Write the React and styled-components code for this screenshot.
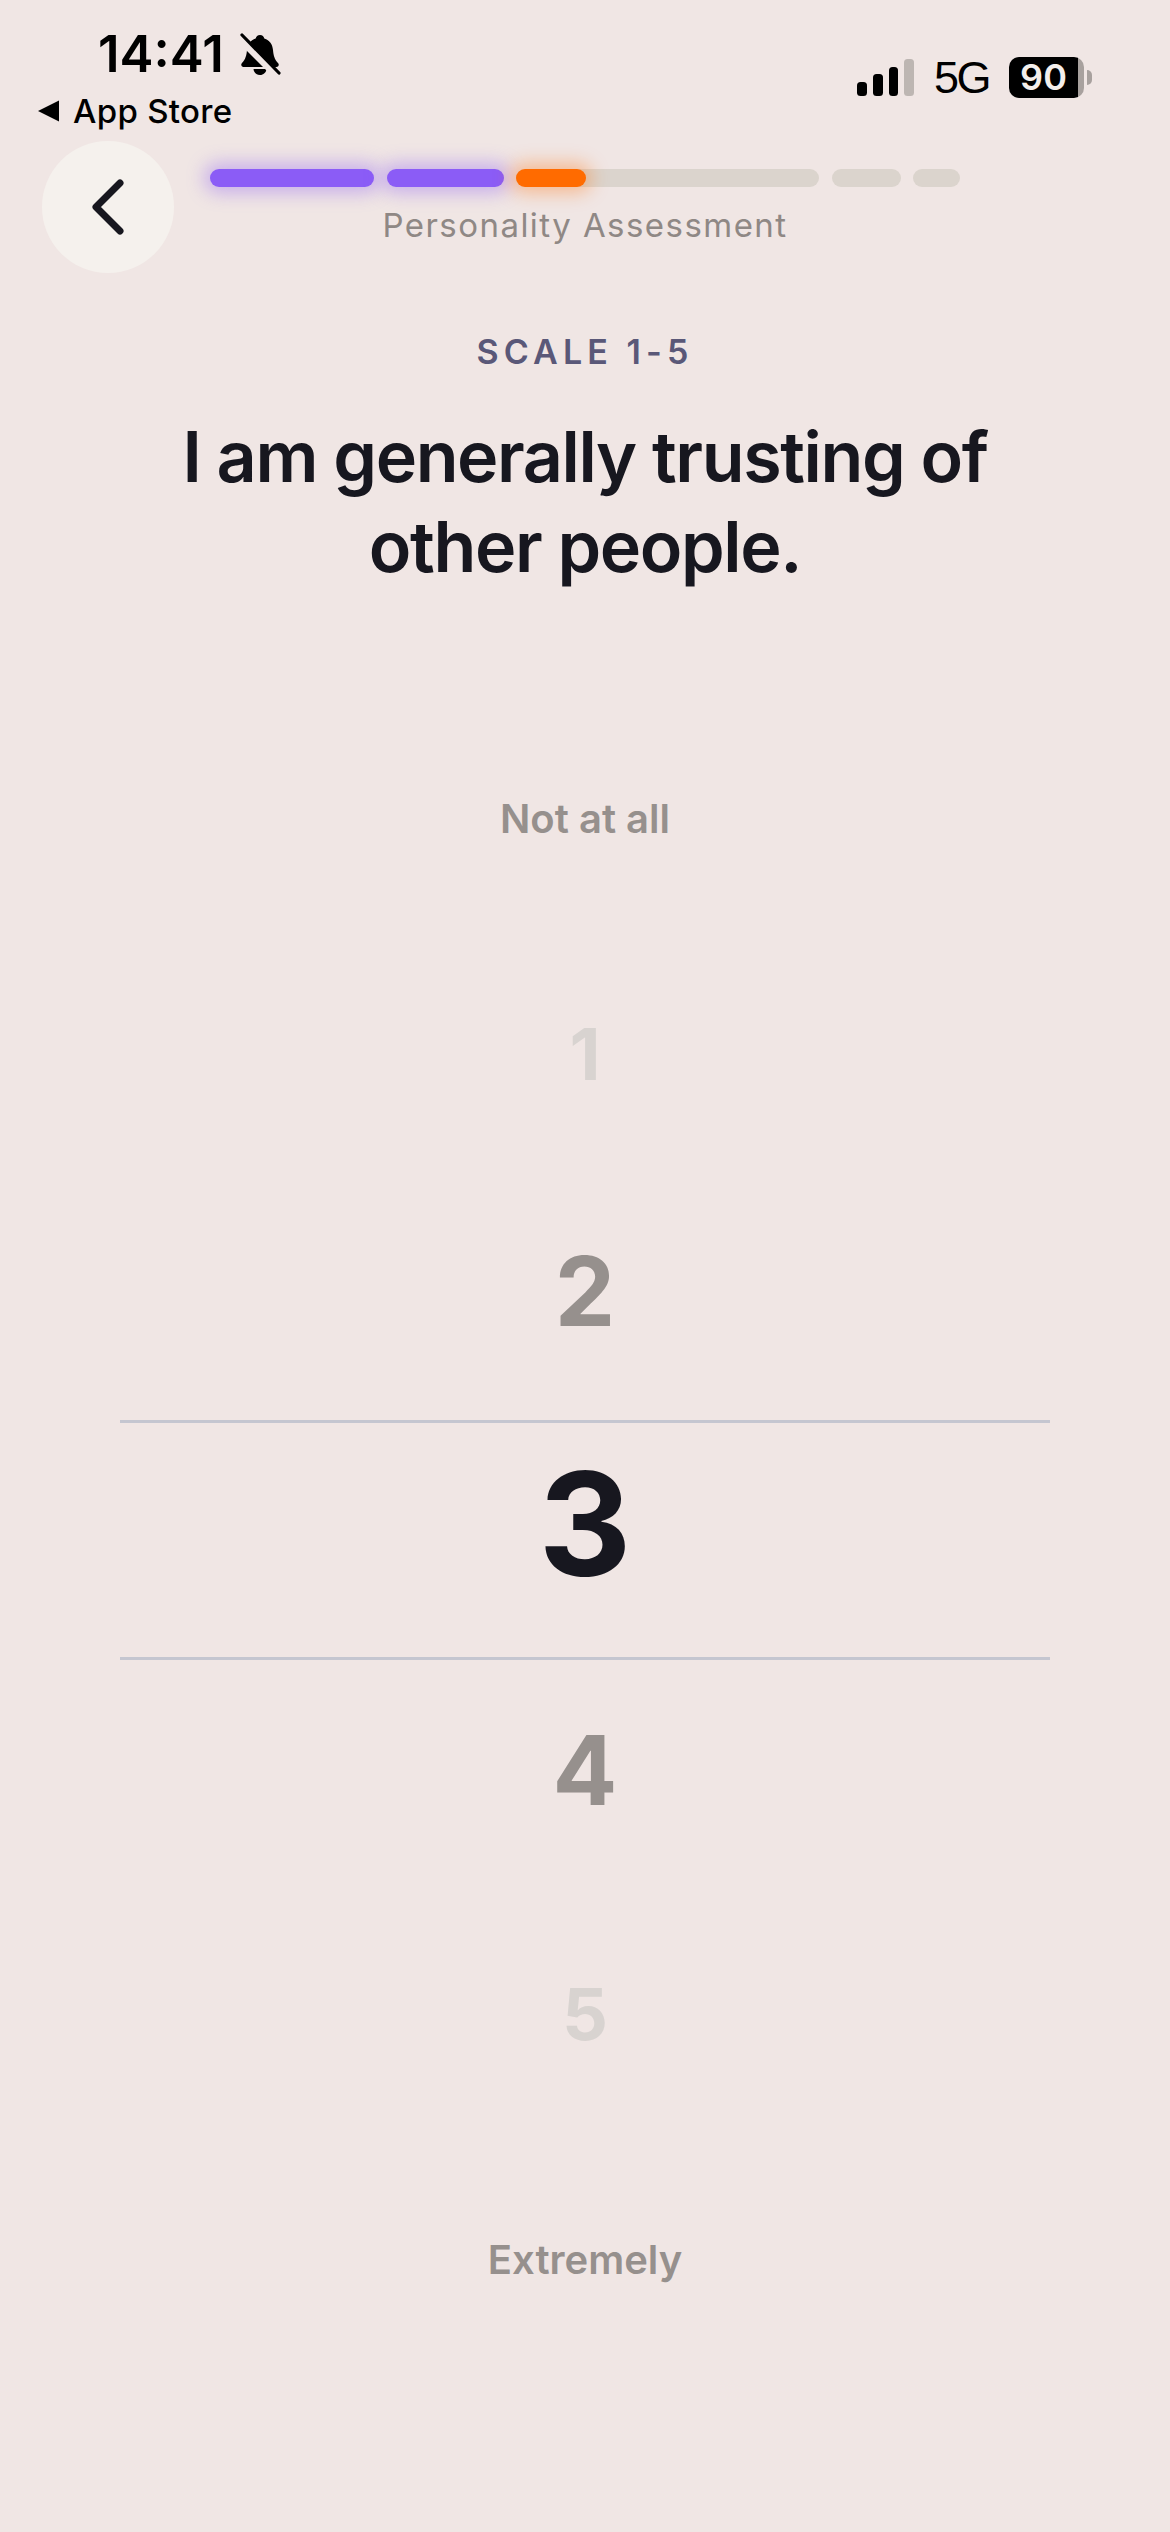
import React from 'react';
import styled, { createGlobalStyle } from 'styled-components';

const Global = createGlobalStyle`
  html, body {
    margin: 0;
    padding: 0;
    background: #f0e6e4;
  }
  * { box-sizing: border-box; }
`;

const Page = styled.div`
  width: 1170px;
  height: 2532px;
  overflow: hidden;
  background: #f0e6e4;
  font-family: Inter, "Liberation Sans", sans-serif;
  color: #17171f;
`;

const StatusBar = styled.div`
  display: flex;
  justify-content: space-between;
  height: 141px;
`;

const StatusLeft = styled.div`
  display: flex;
  flex-direction: column;
  padding: 24px 0 0 38px;
`;

const TimeRow = styled.div`
  display: flex;
  align-items: center;
  gap: 15px;
  padding-left: 60px;
  height: 60px;
`;

const Time = styled.span`
  font-size: 51px;
  font-weight: 600;
  line-height: 60px;
  color: #000;
`;

const BackToApp = styled.div`
  display: flex;
  align-items: center;
  gap: 13px;
  height: 40px;
  margin-top: 7px;
  font-size: 33px;
  font-weight: 500;
  letter-spacing: 0.3px;
  color: #000;
`;

const StatusRight = styled.div`
  display: flex;
  align-items: center;
  gap: 20px;
  height: 41px;
  margin-top: 57px;
  padding-right: 86px;
`;

const Network = styled.span`
  font-family: "Liberation Sans", Arial, sans-serif;
  font-size: 45px;
  line-height: 41px;
  letter-spacing: -2.5px;
  color: #000;
`;

const Battery = styled.div`
  position: relative;
  width: 75px;
  height: 41px;
  border-radius: 10px;
  background: linear-gradient(90deg, #000 0 69px, #a8a19e 69px);
  color: #f4efec;
  font-size: 36px;
  font-weight: 600;
  line-height: 41px;
  text-align: center;
  padding-right: 6px;

  &::after {
    content: '';
    position: absolute;
    left: 78px;
    top: 13px;
    width: 5px;
    height: 15px;
    border-radius: 0 5px 5px 0;
    background: #a8a19e;
  }
`;

const Header = styled.div`
  display: grid;
  grid-template-columns: 132px 750px;
  column-gap: 36px;
  padding-left: 42px;
  height: 132px;
`;

const BackButton = styled.button`
  display: flex;
  align-items: center;
  justify-content: center;
  width: 132px;
  height: 132px;
  padding: 0;
  border: none;
  border-radius: 50%;
  background: #f5f1ed;
`;

const ProgressBlock = styled.div`
  display: flex;
  flex-direction: column;
  align-items: center;
  padding-top: 28px;
`;

const Segments = styled.div`
  display: flex;
  gap: 12.5px;
  width: 100%;
`;

const Segment = styled.div`
  position: relative;
  width: ${(p) => p.$w}px;
  height: 18px;
  border-radius: 9px;
  background: ${(p) => (p.$done ? '#8b5cf6' : '#dbd4cd')};
  box-shadow: ${(p) => (p.$done ? '0 0 18px 6px rgba(139, 92, 246, 0.4)' : 'none')};
`;

const SegmentFill = styled.div`
  position: absolute;
  left: 0;
  top: 0;
  bottom: 0;
  width: ${(p) => p.$w}px;
  border-radius: 9px;
  background: #ff6b00;
  box-shadow: 0 0 18px 6px rgba(255, 107, 0, 0.36);
`;

const Caption = styled.div`
  margin-top: 18px;
  font-size: 33px;
  line-height: 40px;
  letter-spacing: 1.45px;
  color: #8f8885;
`;

const Question = styled.div`
  display: flex;
  flex-direction: column;
  align-items: center;
  padding-top: 57px;
`;

const Eyebrow = styled.div`
  font-size: 34px;
  font-weight: 600;
  line-height: 44px;
  letter-spacing: 5.1px;
  color: #5a5878;
`;

const Title = styled.h1`
  margin: 38px 0 0;
  font-size: 70px;
  font-weight: 600;
  line-height: 90px;
  letter-spacing: -1.4px;
  text-align: center;
  color: #17171f;
`;

const EndLabel = styled.div`
  margin-top: ${(p) => p.$top}px;
  font-size: 40px;
  font-weight: 600;
  line-height: 52px;
  text-align: center;
  color: #96908d;
`;

const Wheel = styled.div`
  display: flex;
  flex-direction: column;
  margin: 101px 120px 0;
`;

const WheelItem = styled.div`
  display: flex;
  align-items: center;
  justify-content: center;
  height: ${(p) => p.$h}px;
  font-size: ${(p) => p.$size}px;
  font-weight: 700;
  line-height: 1;
  color: ${(p) => p.$color};
`;

const SelectedItem = styled(WheelItem)`
  height: 240px;
  padding-bottom: 32px;
  border-top: 3px solid #c5c6d0;
  border-bottom: 3px solid #c5c6d0;
`;

const BellOff = () => (
  <svg width="42" height="44" viewBox="0 0 42 44">
    <path d="M21 3c2.400 0 4 1.600 4.300 3.600 5.400 1.700 8.200 6 8.700 11.400.5 5.200 1.300 9.200 5.200 13.300 1.200 1.300.4 3.700-1.800 3.700H4.600c-2.200 0-3-2.400-1.800-3.700C6.700 27.200 7.500 23.200 8 18c.5-5.400 3.300-9.700 8.700-11.400C17 4.600 18.600 3 21 3z" fill="#000" />
    <path d="M14.500 37h13c-.4 3.600-3.100 6-6.500 6s-6.100-2.400-6.500-6z" fill="#000" />
    <path d="M0 6l37 37" stroke="#f0e6e4" strokeWidth="7" />
    <path d="M3 3l37 38" stroke="#000" strokeWidth="3.200" strokeLinecap="round" />
  </svg>
);

const Signal = () => (
  <svg width="57" height="37" viewBox="0 0 57 37">
    <rect x="0" y="23" width="10" height="14" rx="3.500" fill="#000" />
    <rect x="16" y="15" width="10" height="22" rx="3.500" fill="#000" />
    <rect x="32" y="8" width="9" height="29" rx="3.500" fill="#000" />
    <rect x="47" y="0" width="10" height="37" rx="3.500" fill="#bdb6b2" />
  </svg>
);

const Chevron = () => (
  <svg width="34" height="56" viewBox="0 0 34 56">
    <path d="M29 4L5 28l24 24" fill="none" stroke="#17171f" strokeWidth="7" strokeLinecap="round" strokeLinejoin="round" />
  </svg>
);

const segments = [
  { w: 164, done: true },
  { w: 117, done: true },
  { w: 303, fill: 70 },
  { w: 69 },
  { w: 47 },
];

export default function App() {
  return (
    <Page>
      <Global />
      <StatusBar>
        <StatusLeft>
          <TimeRow>
            <Time>14:41</Time>
            <BellOff />
          </TimeRow>
          <BackToApp>
            <svg width="22" height="22" viewBox="0 0 22 22">
              <path d="M0 11L21 0.500v21z" fill="#000" />
            </svg>
            App Store
          </BackToApp>
        </StatusLeft>
        <StatusRight>
          <Signal />
          <Network>5G</Network>
          <Battery>90</Battery>
        </StatusRight>
      </StatusBar>

      <Header>
        <BackButton aria-label="Back">
          <Chevron />
        </BackButton>
        <ProgressBlock>
          <Segments>
            {segments.map((s, i) => (
              <Segment key={i} $w={s.w} $done={s.done}>
                {s.fill && <SegmentFill $w={s.fill} />}
              </Segment>
            ))}
          </Segments>
          <Caption>Personality Assessment</Caption>
        </ProgressBlock>
      </Header>

      <Question>
        <Eyebrow>SCALE 1-5</Eyebrow>
        <Title>
          I am generally trusting of
          <br />
          other people.
        </Title>
      </Question>

      <EndLabel $top={201}>Not at all</EndLabel>

      <Wheel>
        <WheelItem $h={216} $size={72} $color="#d8d3d0">1</WheelItem>
        <WheelItem $h={258} $size={96} $color="#96908d">2</WheelItem>
        <SelectedItem $size={144} $color="#17171f">3</SelectedItem>
        <WheelItem $h={219} $size={96} $color="#96908d">4</WheelItem>
        <WheelItem $h={270} $size={72} $color="#d8d3d0">5</WheelItem>
      </Wheel>

      <EndLabel $top={85}>Extremely</EndLabel>
    </Page>
  );
}
